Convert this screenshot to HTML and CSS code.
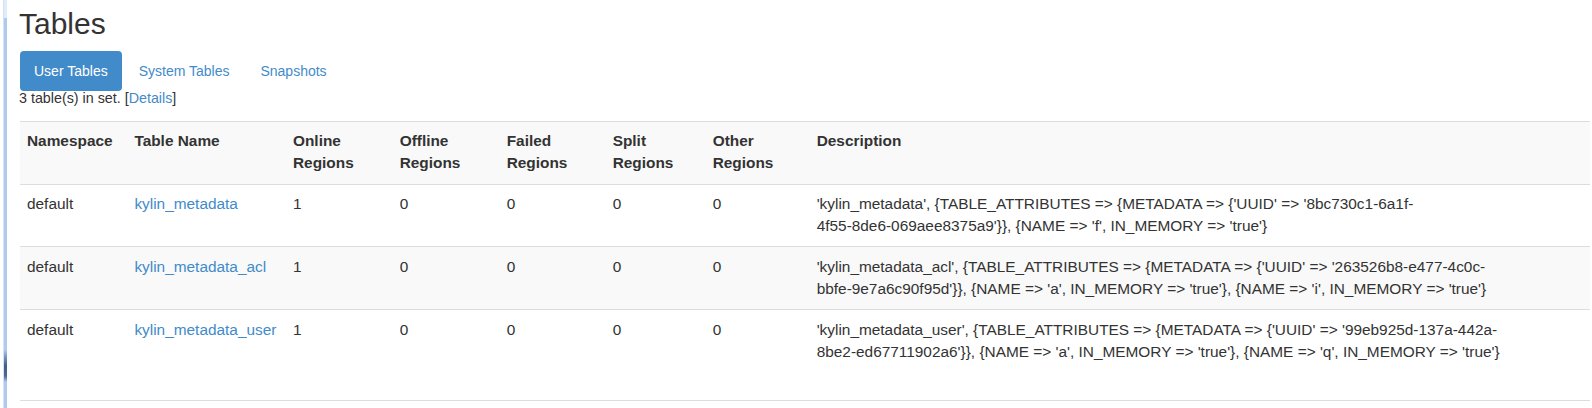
FILE: index.html
```html
<!DOCTYPE html>
<html lang="en">
<head>
    <meta charset="UTF-8">
    <title>Tables</title>
    <link rel="stylesheet" href="styles.css">
</head>
<body>
    <div class="frame">
        <div class="edge"></div>
        <div class="page">
            <h1 class="page-title">Tables</h1>

            <ul class="nav-pills">
                <li class="active"><a href="#userTables">User Tables</a></li>
                <li><a href="#catalogTables">System Tables</a></li>
                <li><a href="#snapshots">Snapshots</a></li>
            </ul>

            <p class="table-count">3 table(s) in set. [<a href="#">Details</a>]</p>

            <table class="table table-striped">
                <colgroup>
                    <col class="col-ns">
                    <col class="col-name">
                    <col class="col-online">
                    <col class="col-offline">
                    <col class="col-failed">
                    <col class="col-split">
                    <col class="col-other">
                    <col>
                </colgroup>
                <tbody>
                    <tr>
                        <th>Namespace</th>
                        <th>Table Name</th>
                        <th>Online Regions</th>
                        <th>Offline Regions</th>
                        <th>Failed Regions</th>
                        <th>Split Regions</th>
                        <th>Other Regions</th>
                        <th class="desc">Description</th>
                    </tr>
                    <tr>
                        <td>default</td>
                        <td><a href="#">kylin_metadata</a></td>
                        <td>1</td>
                        <td>0</td>
                        <td>0</td>
                        <td>0</td>
                        <td>0</td>
                        <td class="desc">'kylin_metadata', {TABLE_ATTRIBUTES =&gt; {METADATA =&gt; {'UUID' =&gt; '8bc730c1-6a1f-<span class="keep">4f55-8de6-069aee8375a9'}},</span> {NAME =&gt; 'f', IN_MEMORY =&gt; 'true'}</td>
                    </tr>
                    <tr>
                        <td>default</td>
                        <td><a href="#">kylin_metadata_acl</a></td>
                        <td>1</td>
                        <td>0</td>
                        <td>0</td>
                        <td>0</td>
                        <td>0</td>
                        <td class="desc">'kylin_metadata_acl', {TABLE_ATTRIBUTES =&gt; {METADATA =&gt; {'UUID' =&gt; '263526b8-e477-4c0c-bbfe-9e7a6c90f95d'}}, {NAME =&gt; 'a', IN_MEMORY =&gt; 'true'}, {NAME =&gt; 'i', IN_MEMORY =&gt; 'true'}</td>
                    </tr>
                    <tr class="last-row">
                        <td>default</td>
                        <td><a href="#">kylin_metadata_user</a></td>
                        <td>1</td>
                        <td>0</td>
                        <td>0</td>
                        <td>0</td>
                        <td>0</td>
                        <td class="desc">'kylin_metadata_user', {TABLE_ATTRIBUTES =&gt; {METADATA =&gt; {'UUID' =&gt; '99eb925d-137a-442a-8be2-ed67711902a6'}}, {NAME =&gt; 'a', IN_MEMORY =&gt; 'true'}, {NAME =&gt; 'q', IN_MEMORY =&gt; 'true'}</td>
                    </tr>
                </tbody>
            </table>
        </div>
    </div>
</body>
</html>
```

FILE: styles.css
```css
body {
    margin: 0;
    font-family: 'Liberation Sans', Arial, Helvetica, sans-serif;
    color: #333;
    background-color: #fff;
}
a {
    color: #428bca;
    text-decoration: none;
}
.frame {
    display: flex;
    min-height: 100vh;
}
.edge {
    flex: 0 0 3px;
    margin-left: 3px;
    border-left: 1px solid #d3e3f6;
    background: linear-gradient(to bottom,
        #e2ecf8 0, #e2ecf8 18px,
        #aecbec 18px, #aecbec 350px,
        #7d9cc4 356px, #3f5f88 366px, #4a6a92 376px,
        #aecbec 382px, #aecbec 100%);
}
.page {
    flex: 1;
    padding: 0 2px 0 12px;
}
.page-title {
    margin: 0;
    padding-top: 7px;
    font-size: 30px;
    line-height: 34px;
    font-weight: normal;
    color: #333;
}
.nav-pills {
    display: flex;
    list-style: none;
    margin: 10px 0 0 1px;
    padding: 0;
}
.nav-pills li + li {
    margin-left: 3px;
}
.nav-pills a {
    display: block;
    padding: 10px 14px;
    font-size: 14px;
    line-height: 20px;
    border-radius: 4px;
}
.nav-pills .active a {
    background-color: #428bca;
    color: #fff;
}
.table-count {
    margin: 0 0 15px 0;
    font-size: 14.3px;
    line-height: 15px;
}
.table {
    width: calc(100% - 1px);
    margin-left: 1px;
    border-collapse: collapse;
    table-layout: fixed;
    border-bottom: 1px solid #ddd;
    font-size: 15.4px;
    line-height: 22px;
}
.table th,
.table td {
    padding: 8.8px 8.8px 8.8px 7px;
    text-align: left;
    vertical-align: top;
    border-top: 1px solid #ddd;
}
.table th {
    padding-top: 7.8px;
    padding-bottom: 9.8px;
    font-weight: bold;
}
.table .desc {
    padding-right: 78px;
}
.keep {
    white-space: nowrap;
}
.table-striped tr:nth-child(odd) {
    background-color: #f9f9f9;
}
.last-row td {
    padding-bottom: 37px;
}
.col-ns { width: 107.4px; }
.col-name { width: 158.6px; }
.col-online { width: 106.7px; }
.col-offline { width: 107px; }
.col-failed { width: 106px; }
.col-split { width: 100px; }
.col-other { width: 104px; }
```
